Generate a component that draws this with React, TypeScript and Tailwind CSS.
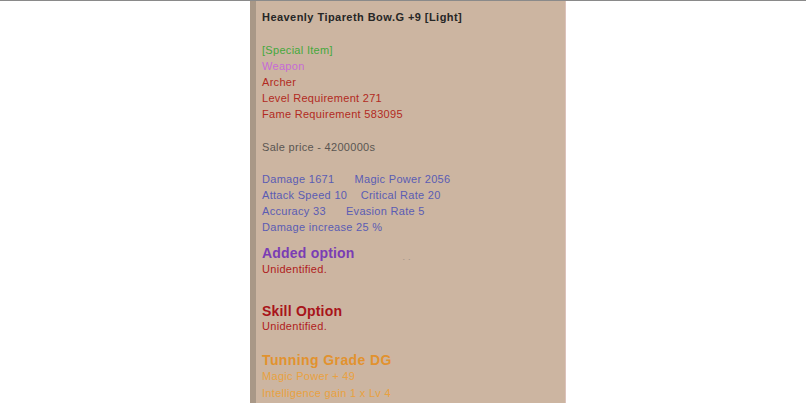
export default function App() {
  return (
    <div className="w-[806px] h-[403px] overflow-hidden bg-white border-t border-[#8a8a8a] relative">
      <div
        className="ml-[250px] w-[316px] h-[420px] bg-[#ccb5a1] flex border-r border-[#dcc2bb]"
        style={{ fontFamily: '"Liberation Sans", Arial, sans-serif' }}
      >
        {/* left strip */}
        <div className="w-[6px] shrink-0 bg-[#a99887]" />

        <div className="pl-[6px] pt-[8px] text-[11px] leading-[16px] tracking-[0.3px] flex flex-col">
          <div className="text-[#262626] font-semibold tracking-[0.45px]">
            Heavenly Tipareth Bow.G +9 [Light]
          </div>

          <div className="mt-[17px] text-[#45a83c]">[Special Item]</div>
          <div className="text-[#c76bd6]">Weapon</div>
          <div className="text-[#b22a22]">Archer</div>
          <div className="text-[#b22a22]">Level Requirement 271</div>
          <div className="text-[#b22a22]">Fame Requirement 583095</div>

          <div className="mt-[17px] text-[#5a5552]">Sale price - 4200000s</div>

          <div className="mt-[16px] text-[#5a5cb4] whitespace-pre">
            {"Damage 1671      Magic Power 2056"}
          </div>
          <div className="text-[#5a5cb4] whitespace-pre">
            {"Attack Speed 10    Critical Rate 20"}
          </div>
          <div className="text-[#5a5cb4] whitespace-pre">
            {"Accuracy 33      Evasion Rate 5"}
          </div>
          <div className="text-[#5a5cb4]">Damage increase 25 %</div>

          <div className="mt-[10px] flex items-center">
            <span className="text-[14px] leading-[14px] font-bold tracking-[0.2px] text-[#7a3db4]">
              Added option
            </span>
            <span className="ml-[48px] mt-[8px] text-[9px] leading-[8px] text-[#9c8f86] tracking-[3px]">
              ..
            </span>
          </div>
          <div className="text-[#b01c1c]">Unidentified.</div>

          <div className="mt-[27px] text-[14px] leading-[14px] font-bold tracking-[0.2px] text-[#a8141a]">
            Skill Option
          </div>
          <div className="text-[#b01c1c]">Unidentified.</div>

          <div className="mt-[19px] text-[14px] leading-[14px] font-bold tracking-[0.4px] text-[#e2922e]">
            Tunning Grade DG
          </div>
          <div className="mt-px text-[#e9a140]">Magic Power + 49</div>
          <div className="mt-px text-[#e9a140]">Intelligence gain 1 x Lv 4</div>
        </div>
      </div>
    </div>
  );
}
